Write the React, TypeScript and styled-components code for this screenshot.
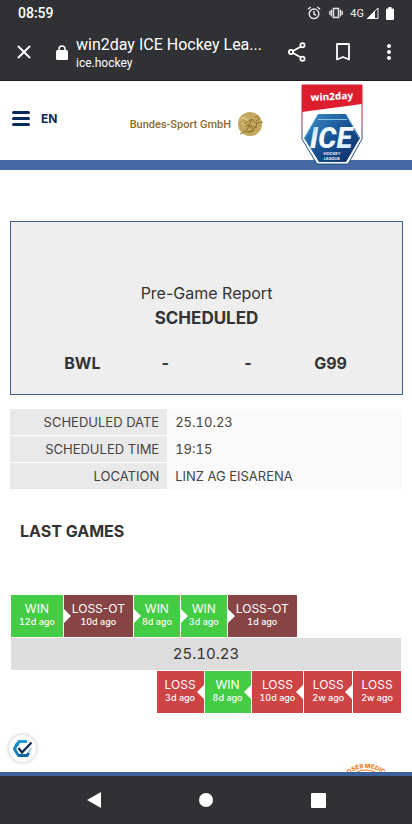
import React from "react";
import styled, { createGlobalStyle, css } from "styled-components";

const GlobalStyle = createGlobalStyle`
  * { box-sizing: border-box; }
  body {
    margin: 0;
    background: #fff;
    color: #333;
    font-family: Inter, "Noto Sans", sans-serif;
  }
  button { font: inherit; color: inherit; background: none; border: 0; padding: 0; cursor: pointer; }
  svg { display: block; }
`;

const Screen = styled.div`
  display: flex;
  flex-direction: column;
  min-height: 100vh;
`;

const BrowserChrome = styled.div`
  background: #303135;
  color: #fff;
  font-family: Roboto, sans-serif;
  border-bottom: 1px solid #222;
`;

const StatusBar = styled.div`
  display: flex;
  align-items: center;
  justify-content: space-between;
  height: 26px;
  padding: 0 18px;
`;

const Clock = styled.time`
  font-size: 14px;
  font-weight: 500;
`;

const StatusIcons = styled.div`
  display: flex;
  align-items: center;
  font-size: 11px;
  color: #eee;
`;

const Network = styled.span`
  margin: 0 2px 0 7px;
`;

const Toolbar = styled.div`
  display: flex;
  align-items: center;
  height: 54px;
  padding: 0 11px 2px 12px;
`;

const IconButton = styled.button`
  display: grid;
  place-items: center;
  flex: none;
  width: 24px;
  height: 32px;
`;

const Address = styled.div`
  flex: 1;
  min-width: 0;
  margin-left: 8px;
  padding-top: 2px;
  line-height: 20px;
`;

const PageTitle = styled.div`
  font-size: 16px;
  white-space: nowrap;
`;

const Host = styled.div`
  font-size: 12px;
  line-height: 16px;
`;

const LockSlot = styled.span`
  margin-left: 20px;
`;

const Actions = styled.div`
  display: flex;
  gap: 22px;
  margin-left: 16px;
`;

const SiteHeader = styled.header`
  display: flex;
  align-items: flex-start;
  height: 89px;
  padding: 0 49px 0 12px;
  border-bottom: 10px solid #4368a4;
`;

const MenuButton = styled.button`
  margin-top: 29px;
`;

const Language = styled.a`
  margin: 30px auto 0 11px;
  color: #0b2a5c;
  font-size: 12px;
  font-weight: 700;
  line-height: 16px;
  text-decoration: none;
`;

const Sponsor = styled.a`
  display: flex;
  align-items: center;
  gap: 6px;
  margin: 30px 36px 0 0;
  color: #8b6a3a;
  font-family: Roboto, sans-serif;
  font-size: 11px;
  font-weight: 500;
  text-decoration: none;
`;

const LeagueLink = styled.a`
  margin-top: 3px;
`;

const Main = styled.main`
  padding: 51px 9px 0 10px;
`;

const GameCard = styled.section`
  border: 1px solid #3e608f;
  background: #eee;
  padding: 58px 30px 18px;
  text-align: center;
`;

const ReportLabel = styled.div`
  font-size: 16px;
  line-height: 26px;
`;

const GameStatus = styled.div`
  font-size: 17px;
  font-weight: 700;
  line-height: 24px;
`;

const Matchup = styled.div`
  display: grid;
  grid-template-columns: repeat(4, 1fr);
  margin-top: 20px;
  font-size: 16px;
  font-weight: 700;
  line-height: 26px;
`;

const Details = styled.table`
  width: 100%;
  margin-top: 14px;
  border-collapse: collapse;
  font-size: 13px;
  line-height: 18px;
  color: #444;
  background: #fafafa;

  th, td { padding: 4px 8px; font-weight: 400; }
  th { width: 40%; text-align: right; background: #e9e9e9; border-bottom: 1px solid #fff; }
  td { text-align: left; font-variant-numeric: tabular-nums; }
`;

const Heading = styled.h2`
  margin: 29px 10px 52px;
  font-size: 16px;
  line-height: 24px;
`;

const Timeline = styled.section`
  display: flex;
  flex-direction: column;
  gap: 1px;
  padding: 0 2px 0 1px;
`;

const Results = styled.div<{ $away?: boolean }>`
  display: flex;
  gap: 1px;
  justify-content: ${(p) => (p.$away ? "flex-end" : "flex-start")};
`;

type Outcome = "WIN" | "LOSS" | "LOSS-OT";
const outcomeColor: Record<Outcome, string> = {
  WIN: "#44cc44",
  LOSS: "#cc4444",
  "LOSS-OT": "#884444",
};

const Result = styled.a<{ $outcome: Outcome; $notch?: "left" | "right" }>`
  position: relative;
  height: 42px;
  padding: 6px 8px;
  background: ${(p) => outcomeColor[p.$outcome]};
  color: #fff;
  font-size: 12px;
  line-height: 16px;
  text-align: center;
  text-decoration: none;

  ${(p) =>
    p.$notch &&
    css`
      &::before {
        content: "";
        position: absolute;
        top: 14px;
        ${p.$notch}: 0;
        border: 7px solid transparent;
        border-${p.$notch}-color: #fff;
        border-${p.$notch === "left" ? "right" : "left"}-width: 0;
      }
    `}
`;

const Ago = styled.div`
  font-size: 9px;
  font-weight: 500;
  line-height: 10px;
  font-variant-numeric: tabular-nums;
`;

const DateBar = styled.div`
  background: #ddd;
  font-size: 15px;
  line-height: 32px;
  text-align: center;
  font-variant-numeric: tabular-nums;
`;

const PageEnd = styled.div`
  display: flex;
  flex: 1;
  align-items: flex-end;
  justify-content: space-between;
  min-height: 59px;
  padding: 0 23px 0 9px;
  border-bottom: 4px solid #3c609b;
`;

const ConsentButton = styled.button`
  display: grid;
  place-items: center;
  width: 27px;
  height: 27px;
  margin-bottom: 10px;
  border-radius: 50%;
  background: #fff;
  box-shadow: 0 0 4px #bbb;
`;

const SystemNav = styled.nav`
  display: flex;
  align-items: center;
  justify-content: center;
  gap: 88px;
  height: 48px;
  background: #303135;
`;

const homeGames: [Outcome, string][] = [
  ["WIN", "12d ago"],
  ["LOSS-OT", "10d ago"],
  ["WIN", "8d ago"],
  ["WIN", "3d ago"],
  ["LOSS-OT", "1d ago"],
];
const awayGames: [Outcome, string][] = [
  ["LOSS", "3d ago"],
  ["WIN", "8d ago"],
  ["LOSS", "10d ago"],
  ["LOSS", "2w ago"],
  ["LOSS", "2w ago"],
];

const Alarm = () => (
  <svg width="14" height="14" viewBox="0 0 14 14" fill="none" stroke="#eee" strokeWidth="1.4">
    <circle cx="7" cy="7.8" r="4.8" />
    <path d="M1 3.2 3.7 1M13 3.2 10.3 1M7 5v3l2 1.3" />
  </svg>
);
const Vibrate = () => (
  <svg width="14" height="12" viewBox="0 0 14 12" fill="none" stroke="#ddd">
    <rect x="4.5" y="1.5" width="5" height="9" strokeWidth="1.6" />
    <path d="M2.5 2.500v7M.8 4v4M11.500 2.500v7M13.200 4v4" strokeWidth="1.4" />
  </svg>
);
const Signal = () => (
  <svg width="13" height="12" viewBox="0 0 13 12">
    <path d="M12 1v10.500H1.500z" fill="none" stroke="#eee" />
    <path d="M9 3.500V12H.5z" fill="#fff" />
  </svg>
);
const Battery = () => (
  <svg width="8" height="13" viewBox="0 0 8 13" fill="#fff">
    <path d="M2.500 0h3v1.500H7a1 1 0 0 1 1 1V12a1 1 0 0 1-1 1H1a1 1 0 0 1-1-1V2.500a1 1 0 0 1 1-1h1.500z" />
  </svg>
);
const IconGap = styled.span<{ $w: number }>`
  width: ${(p) => p.$w}px;
`;

const SportMedal = () => (
  <svg width="28" height="26" viewBox="0 0 28 26" fill="none">
    <circle cx="13" cy="13" r="12" fill="#c2a75c" />
    <path d="M4 8c3-3 6 0 7 3M5 12l4 3M7 6l3 3" stroke="#dccb92" strokeWidth="1.500" />
    <path d="M3 23l7-4 2-5-4 1M7 13l8-5 4 4 7-1M12 15l5 4-5 3M15 9l-3 5 7 3 1-5M18 7a2 2 0 1 1 3 2l-2 1M19 15l-4 5-6 1" stroke="#90702d" strokeWidth="1" strokeLinejoin="round" />
  </svg>
);

const LeagueLogo = () => (
  <svg width="62" height="82" viewBox="0 0 62 82" role="img" aria-label="win2day ICE Hockey League">
    <defs>
      <linearGradient id="edge" x2="0" y2="1">
        <stop offset=".35" stopColor="#dc1e2f" />
        <stop offset=".7" stopColor="#20508c" />
      </linearGradient>
      <linearGradient id="shield" x2="1" y2="1">
        <stop stopColor="#3b91c7" />
        <stop offset=".5" stopColor="#185294" />
        <stop offset="1" stopColor="#0b2c63" />
      </linearGradient>
      <linearGradient id="ice" x2="1" y2="1">
        <stop stopColor="#8dd1f2" />
        <stop offset=".4" stopColor="#fff" />
        <stop offset="1" stopColor="#c4e6f7" />
      </linearGradient>
    </defs>
    <path d="M1 1h60v54L47 80H16L1 55z" fill="#fff" stroke="url(#edge)" />
    <path d="M1 1h60v19L1 28z" fill="#dc1e2f" />
    <path d="M17 30h28l14 24-14 24H18L3 54z" fill="url(#shield)" />
    <path d="M17 35.500h29" stroke="#85c3e5" />
    <path d="M4 54 17 31M58 54 45 31" stroke="#4c9bcc" />
    <text x="31" y="16" fill="#fff" fontFamily="Noto Sans, sans-serif" fontSize="10" fontWeight="800" textAnchor="middle" transform="rotate(-3 31 13)">win2day</text>
    <text x="30" y="64" fill="url(#ice)" fontFamily="Roboto, sans-serif" fontSize="29" fontStyle="italic" fontWeight="800" textAnchor="middle">ICE</text>
    <text x="31" y="71" fill="#fff" fontFamily="Inter, sans-serif" fontSize="4" fontWeight="600" textAnchor="middle">HOCKEY</text>
    <text x="31" y="76" fill="#fff" fontFamily="Inter, sans-serif" fontSize="4" fontWeight="600" textAnchor="middle">LEAGUE</text>
  </svg>
);

const ConsentIcon = () => (
  <svg width="21" height="20" viewBox="0 0 21 20" fill="none" strokeWidth="3">
    <path d="M5 6.500 7 2.500h8" stroke="#219bd1" />
    <path d="M5.500 4 2.500 10l3.500 6" stroke="#1685c4" />
    <path d="M5.500 16.500H15l2-3" stroke="#1264a3" />
    <path d="m16.500 14 2.500-5" stroke="#b8d5ee" />
    <path d="m6.500 9 3.500 4.500L19.500 3.500" stroke="#0c2852" strokeWidth="2.200" />
  </svg>
);

const MedicalSeal = () => (
  <svg width="46" height="11" viewBox="0 0 46 11" fill="none">
    <defs>
      <path id="sealArc" d="M-4 34a27 27 0 0 1 54 0" />
    </defs>
    <text fill="#f57a20" fontFamily="Inter, sans-serif" fontSize="6" fontWeight="800" textAnchor="middle">
      <textPath href="#sealArc" startOffset="50%">OSER MEDIC</textPath>
    </text>
    <circle cx="23" cy="30" r="21" stroke="#f57a20" />
  </svg>
);

export default function App() {
  return (
    <Screen>
      <GlobalStyle />
      <BrowserChrome>
        <StatusBar>
          <Clock>08:59</Clock>
          <StatusIcons>
            <Alarm />
            <IconGap $w={8} />
            <Vibrate />
            <Network>4G</Network>
            <Signal />
            <IconGap $w={7} />
            <Battery />
          </StatusIcons>
        </StatusBar>
        <Toolbar>
          <IconButton aria-label="Close">
            <svg width="14" height="14" viewBox="0 0 14 14" stroke="#fff" strokeWidth="2">
              <path d="m1 1 12 12M13 1 1 13" />
            </svg>
          </IconButton>
          <LockSlot>
            <svg width="12" height="15" viewBox="0 0 12 15" fill="none">
              <rect y="5" width="12" height="10" rx="1.500" fill="#fff" />
              <path d="M3 6V4a3 3 0 0 1 6 0v2" stroke="#fff" strokeWidth="1.500" />
            </svg>
          </LockSlot>
          <Address>
            <PageTitle>win2day ICE Hockey Lea...</PageTitle>
            <Host>ice.hockey</Host>
          </Address>
          <Actions>
            <IconButton aria-label="Share">
              <svg width="18" height="20" viewBox="0 0 18 20" fill="none" stroke="#fff" strokeWidth="1.800">
                <path d="m5 9 8-4.500M5 11l8 4.500" />
                <circle cx="3" cy="10" r="2.100" />
                <circle cx="14.500" cy="3.300" r="2.100" />
                <circle cx="14.500" cy="16.700" r="2.100" />
              </svg>
            </IconButton>
            <IconButton aria-label="Bookmark">
              <svg width="14" height="18" viewBox="0 0 14 18" fill="none" stroke="#fff" strokeWidth="1.800">
                <path d="M1 1h12v15.500L7 14l-6 2.500z" strokeLinejoin="round" />
              </svg>
            </IconButton>
            <IconButton aria-label="More options">
              <svg width="4" height="16" viewBox="0 0 4 16" fill="#fff">
                <circle cx="2" cy="2" r="2" />
                <circle cx="2" cy="8" r="2" />
                <circle cx="2" cy="14" r="2" />
              </svg>
            </IconButton>
          </Actions>
        </Toolbar>
      </BrowserChrome>

      <SiteHeader>
        <MenuButton aria-label="Menu">
          <svg width="18" height="17" viewBox="0 0 18 17" stroke="#0b2a5c" strokeWidth="3" strokeLinecap="round">
            <path d="M1.500 2.500h15M1.500 8.500h15M1.500 14.500h15" />
          </svg>
        </MenuButton>
        <Language href="#en">EN</Language>
        <Sponsor href="#sponsor">
          Bundes-Sport GmbH
          <SportMedal />
        </Sponsor>
        <LeagueLink href="#home">
          <LeagueLogo />
        </LeagueLink>
      </SiteHeader>

      <Main>
        <GameCard>
          <ReportLabel>Pre-Game Report</ReportLabel>
          <GameStatus>SCHEDULED</GameStatus>
          <Matchup>
            <span>BWL</span>
            <span>-</span>
            <span>-</span>
            <span>G99</span>
          </Matchup>
        </GameCard>
        <Details>
          <tbody>
            <tr>
              <th scope="row">SCHEDULED DATE</th>
              <td>25.10.23</td>
            </tr>
            <tr>
              <th scope="row">SCHEDULED TIME</th>
              <td>19:15</td>
            </tr>
            <tr>
              <th scope="row">LOCATION</th>
              <td>LINZ AG EISARENA</td>
            </tr>
          </tbody>
        </Details>
        <Heading>LAST GAMES</Heading>
        <Timeline>
          <Results>
            {homeGames.map(([outcome, ago], i) => (
              <Result key={i} href="#game" $outcome={outcome} $notch={i > 0 ? "left" : undefined}>
                {outcome}
                <Ago>{ago}</Ago>
              </Result>
            ))}
          </Results>
          <DateBar>25.10.23</DateBar>
          <Results $away>
            {awayGames.map(([outcome, ago], i) => (
              <Result
                key={i}
                href="#game"
                $outcome={outcome}
                $notch={i < awayGames.length - 1 ? "right" : undefined}
              >
                {outcome}
                <Ago>{ago}</Ago>
              </Result>
            ))}
          </Results>
        </Timeline>
      </Main>

      <PageEnd>
        <ConsentButton aria-label="Consent settings">
          <ConsentIcon />
        </ConsentButton>
        <MedicalSeal />
      </PageEnd>
      <SystemNav>
        <IconButton aria-label="Back">
          <svg width="15" height="16" viewBox="0 0 15 16" fill="#fff">
            <path d="M14 0v16L0 8z" />
          </svg>
        </IconButton>
        <IconButton aria-label="Home">
          <svg width="14" height="14" viewBox="0 0 14 14" fill="#fff">
            <circle cx="7" cy="7" r="7" />
          </svg>
        </IconButton>
        <IconButton aria-label="Recent apps">
          <svg width="15" height="15" viewBox="0 0 15 15" fill="#fff">
            <rect width="15" height="15" rx="1" />
          </svg>
        </IconButton>
      </SystemNav>
    </Screen>
  );
}
